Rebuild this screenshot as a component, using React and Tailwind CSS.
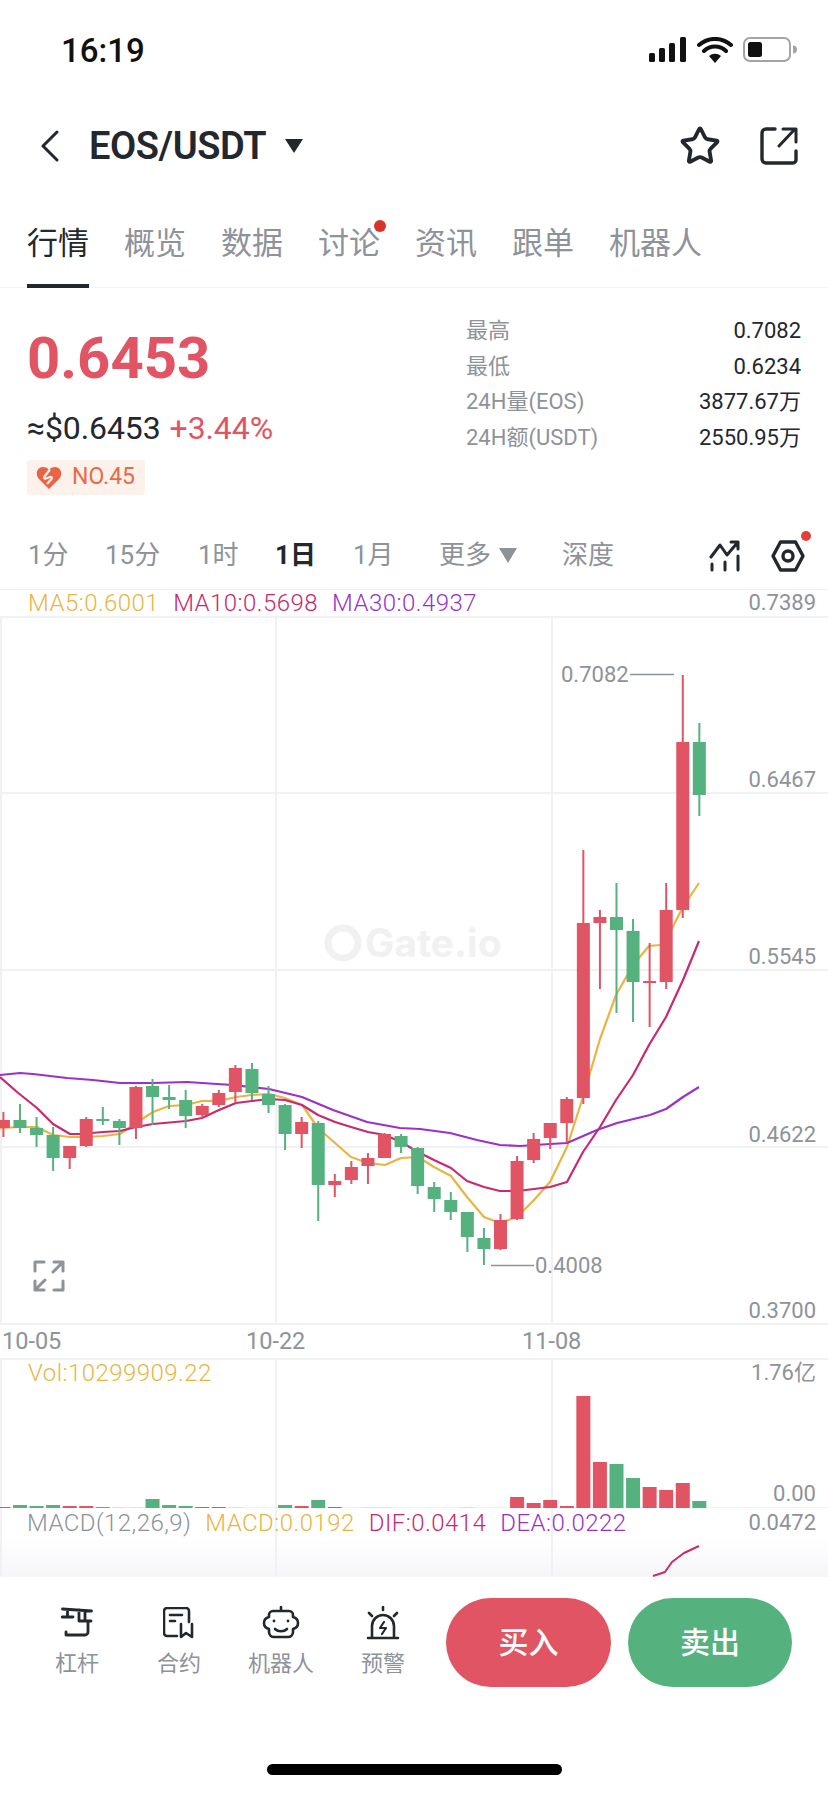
import React from "react";
import { Star } from "lucide-react";

const RED = "#e15464";
const GREEN = "#55b27f";
const ORANGE = "#e8b545";
const PINK = "#c8296f";
const PURPLE = "#9a32c8";

// i: index on the time axis; [color, wickTop, wickBottom, bodyTop, bodyBottom] in page pixels
const candles = [
  ["r", 1112, 1137, 1120, 1128],
  ["g", 1104, 1133, 1120, 1128],
  ["g", 1117, 1147, 1128, 1135],
  ["g", 1127, 1171, 1135, 1158],
  ["r", 1146, 1169, 1146, 1158],
  ["r", 1117, 1147, 1119, 1146],
  ["g", 1107, 1125, 1119, 1120, 1],
  ["g", 1119, 1145, 1121, 1128],
  ["r", 1086, 1139, 1087, 1128],
  ["g", 1079, 1125, 1086, 1097],
  ["g", 1085, 1109, 1097, 1099, 1],
  ["g", 1090, 1128, 1100, 1116],
  ["r", 1104, 1118, 1106, 1115],
  ["r", 1090, 1107, 1093, 1105],
  ["r", 1065, 1103, 1068, 1092],
  ["g", 1063, 1100, 1069, 1093],
  ["g", 1086, 1113, 1094, 1105],
  ["g", 1104, 1150, 1105, 1134],
  ["r", 1117, 1148, 1122, 1134],
  ["g", 1121, 1221, 1123, 1185],
  ["r", 1174, 1197, 1181, 1185],
  ["r", 1161, 1184, 1167, 1180],
  ["r", 1153, 1184, 1158, 1166],
  ["r", 1133, 1158, 1134, 1158],
  ["g", 1134, 1153, 1136, 1147],
  ["g", 1147, 1194, 1148, 1186],
  ["g", 1182, 1212, 1187, 1199],
  ["g", 1192, 1220, 1200, 1212],
  ["g", 1212, 1252, 1212, 1237],
  ["g", 1228, 1265, 1238, 1249],
  ["r", 1214, 1250, 1220, 1249],
  ["r", 1156, 1220, 1161, 1219],
  ["r", 1133, 1163, 1139, 1160],
  ["r", 1123, 1149, 1123, 1138],
  ["r", 1097, 1142, 1099, 1123],
  ["r", 850, 1104, 923, 1098],
  ["r", 910, 989, 917, 923],
  ["g", 883, 1013, 917, 930],
  ["g", 919, 1022, 931, 982],
  ["r", 943, 1027, 981, 982, 1],
  ["r", 883, 989, 910, 982],
  ["r", 675, 918, 742, 910],
  ["g", 723, 816, 742, 795],
];

const cx = (i) => 3.4 + i * 16.57;

const ma30 =
  "0,1075 20,1073 33,1074 67,1078 93,1080 120,1083 153,1083 187,1082 217,1084 233,1085 269,1089 302,1097 333,1110 367,1122 400,1128 420,1129 450,1133 477,1140 500,1145 520,1146 550,1144 567,1143 597,1130 617,1123 650,1115 666,1109 683,1097 699,1087";
const ma10 =
  "0,1077 17,1092 37,1108 53,1124 70,1134 80,1134 103,1132 120,1131 136,1127 153,1124 186,1121 202,1118 219,1110 236,1103 252,1101 269,1099 285,1100 302,1105 318,1115 335,1122 351,1127 368,1132 385,1135 401,1142 418,1152 434,1160 451,1168 467,1181 484,1187 500,1191 517,1191 534,1189 550,1187 567,1182 583,1152 600,1127 616,1100 633,1075 649,1045 666,1017 683,980 699,941";
const ma5 =
  "0,1128 20,1127 37,1127 53,1135 70,1137 87,1137 103,1136 120,1134 136,1123 153,1112 169,1106 186,1105 202,1101 219,1101 236,1097 252,1095 269,1094 285,1098 302,1105 318,1128 335,1143 351,1157 368,1163 385,1165 401,1158 418,1157 434,1167 451,1176 467,1197 484,1217 500,1223 517,1217 534,1200 550,1182 567,1147 583,1097 600,1039 616,995 633,965 649,946 660,945 666,940 683,907 699,883";

const volBars = [
  [0, 1507, "r"], [1, 1505, "g"], [2, 1506, "g"], [3, 1505, "g"], [4, 1506, "r"], [5, 1506, "r"], [6, 1507, "g"],
  [7, 1507, "n"], [8, 1507, "n"], [9, 1499, "g"], [10, 1505, "g"], [11, 1506, "g"], [12, 1507, "r"], [13, 1507, "r"],
  [14, 1507, "n"], [17, 1505, "g"], [18, 1506, "r"], [19, 1500, "g"], [20, 1507, "r"], [22, 1507, "n"], [23, 1507, "n"],
  [28, 1507, "n"], [31, 1497, "r"], [32, 1503, "r"], [33, 1500, "r"], [34, 1506, "r"], [35, 1396, "r"], [36, 1462, "r"],
  [37, 1464, "g"], [38, 1478, "g"], [39, 1487, "r"], [40, 1490, "r"], [41, 1483, "r"], [42, 1501, "g"],
];

const barFill = { r: RED, g: GREEN, n: "#dfe1e4" };

const tabs = ["行情", "概览", "数据", "讨论", "资讯", "跟单", "机器人"];
const periods = [
  ["1分", "w-[77px]"],
  ["15分", "w-[93px]"],
  ["1时", "w-[77px]"],
  ["1日", "w-[78px]"],
  ["1月", "w-[86px]"],
];
const stats = [
  ["最高", "0.7082"],
  ["最低", "0.6234"],
  ["24H量(EOS)", "3877.67万"],
  ["24H额(USDT)", "2550.95万"],
];

const StatusIcons = () => (
  <svg width="148" height="26" viewBox="0 0 148 26">
    <rect x="0" y="16" width="6" height="9" rx="1.5" fill="#111" />
    <rect x="10" y="11" width="6" height="14" rx="1.5" fill="#111" />
    <rect x="20" y="6" width="6" height="19" rx="1.5" fill="#111" />
    <rect x="31" y="0" width="6" height="25" rx="1.5" fill="#111" />
    <path d="M50 8a24 24 0 0 1 32 0M55 14a16 16 0 0 1 22 0" fill="none" stroke="#111" strokeWidth="4" strokeLinecap="round" />
    <path d="M60 19a9 9 0 0 1 12 0l-6 7z" fill="#111" />
    <rect x="95" y="1" width="46" height="23" rx="6" fill="none" stroke="#a4a4a4" strokeWidth="2" />
    <rect x="99" y="5" width="14" height="15" rx="2.5" fill="#111" />
    <path d="M144 8.5a4 4 0 0 1 0 8z" fill="#a4a4a4" />
  </svg>
);

const ShareIcon = () => (
  <svg width="38" height="38" viewBox="0 0 38 38" fill="none" stroke="#23272e" strokeWidth="3.4" strokeLinecap="round" strokeLinejoin="round">
    <path d="M15 2H6a4 4 0 0 0-4 4v26a4 4 0 0 0 4 4h27a3 3 0 0 0 3-3V24" />
    <path d="M19 19L35 2M23 2h13v13" strokeWidth="3" />
  </svg>
);

const LeverIcon = () => (
  <svg width="32" height="32" viewBox="0 0 32 32" fill="none" stroke="#23272e" strokeWidth="2.8" strokeLinecap="round" strokeLinejoin="round">
    <path d="M1.500 2l29 2M1 10h11M6.500 3v7M18 14h12M24 4v10M18 3v11M27 14v11a3 3 0 0 1-3 3H5M5 25v3" />
  </svg>
);

const ContractIcon = () => (
  <svg width="32" height="32" viewBox="0 0 32 32" fill="none" stroke="#23272e" strokeWidth="2.6" strokeLinecap="round" strokeLinejoin="round">
    <path d="M26 15V4a3 3 0 0 0-3-3H4a3 3 0 0 0-3 3v22a3 3 0 0 0 3 3h10" />
    <path d="M7 8h12M7 14h5M18 17v13l5-4 6 4V17" />
  </svg>
);

const RobotIcon = () => (
  <svg width="38" height="34" viewBox="0 0 38 34" fill="none" stroke="#23272e" strokeWidth="2.6" strokeLinecap="round" strokeLinejoin="round">
    <path d="M19 1v4M11 5h16a4 4 0 0 1 4 4v2c4 1 5 4 5 6s-1 5-5 6v3a5 5 0 0 1-5 5H12a5 5 0 0 1-5-5v-3c-4-1-5-4-5-6s1-5 5-6V9a4 4 0 0 1 4-4z" />
    <path d="M13 23c3 3 9 3 12 0" />
    <circle cx="12" cy="15" r="1.4" fill="#23272e" stroke="none" />
    <circle cx="26" cy="15" r="1.4" fill="#23272e" stroke="none" />
  </svg>
);

const AlarmIcon = () => (
  <svg width="34" height="34" viewBox="0 0 34 34" fill="none" stroke="#23272e" strokeWidth="2.6" strokeLinecap="round" strokeLinejoin="round">
    <path d="M2 32h30M6 32V20a11 11 0 0 1 22 0v12M17 1v3M3 7l3 3M31 7l-3 3" />
    <path d="M18 16l-4 6h6l-4 6" strokeWidth="2.2" />
  </svg>
);

const tools = [
  ["杠杆", LeverIcon],
  ["合约", ContractIcon],
  ["机器人", RobotIcon],
  ["预警", AlarmIcon],
];

const MainChart = () => (
  <svg className="absolute left-0 top-0" width="828" height="769" viewBox="0 589 828 769">
    {/* grid */}
    <g stroke="#f0f1f5" strokeWidth="2">
      <path d="M0 589H828M0 617H828M0 793H828M0 970H828M0 1147H828M0 1324H828" fill="none" />
      <path d="M1 617V1324M276 617V1324M552 617V1324" fill="none" />
    </g>
    {/* watermark */}
    <circle cx="343" cy="943" r="15" fill="none" stroke="#f1f1f1" strokeWidth="7" />
    <text x="365" y="957" fontSize="39" fontWeight="700" fill="#f1f1f1" fontFamily="Inter, sans-serif">Gate.io</text>
    {/* moving averages */}
    <g fill="none" strokeWidth="2.2" strokeLinejoin="round">
      <polyline points={ma5} stroke={ORANGE} />
      <polyline points={ma10} stroke={PINK} />
      <polyline points={ma30} stroke={PURPLE} />
    </g>
    {/* candles */}
    {candles.map(([c, wt, wb, bt, bb, doji], i) => {
      const color = c === "r" ? RED : GREEN;
      return (
        <g key={i} fill={color}>
          <rect x={cx(i) - 1} y={wt} width="2" height={wb - wt} />
          <rect x={cx(i) - 6.5} y={bt} width="13" height={bb - bt + (doji ? 1 : 0)} />
        </g>
      );
    })}
    {/* high / low markers */}
    <path d="M630 674.5H674M491 1265.5H534" stroke="#8e9299" strokeWidth="1.5" fill="none" />
    <g fill="#8e9299" fontSize="22" fontFamily="Roboto, sans-serif">
      <text x="561" y="682">0.7082</text>
      <text x="535" y="1273">0.4008</text>
      <text x="816" y="787" textAnchor="end">0.6467</text>
      <text x="816" y="964" textAnchor="end">0.5545</text>
      <text x="816" y="1142" textAnchor="end">0.4622</text>
      <text x="816" y="1318" textAnchor="end">0.3700</text>
      <text x="2" y="1349" fontSize="23.5">10-05</text>
      <text x="246" y="1349" fontSize="23.5">10-22</text>
      <text x="522" y="1349" fontSize="23.5">11-08</text>
    </g>
  </svg>
);

const VolumeChart = () => (
  <svg className="absolute left-0 top-0" width="828" height="150" viewBox="0 1358 828 150">
    <path d="M0 1359H828M0 1508H828" stroke="#f0f1f5" strokeWidth="2" fill="none" />
    <path d="M1 1358V1508M276 1358V1508M552 1358V1508" stroke="#f0f1f5" strokeWidth="2" fill="none" />
    {volBars.map(([i, top, c]) => (
      <rect key={i} x={cx(i) - 7} y={top} width="14" height={1508 - top} fill={barFill[c]} />
    ))}
  </svg>
);

const MacdChart = () => (
  <svg className="absolute left-0 top-0" width="828" height="69" viewBox="0 1508 828 69">
    <path d="M1 1508V1577M276 1508V1577M552 1508V1577" stroke="#f0f1f5" strokeWidth="2" fill="none" />
    <polyline points="653,1576 665,1572 672,1562 684,1553 699,1546" fill="none" stroke={PINK} strokeWidth="2" strokeLinejoin="round" />
  </svg>
);

const App = () => {
  return (
    <div className="w-[828px] h-[1793px] bg-white flex flex-col overflow-hidden font-['Roboto','Noto_Sans_CJK_SC',sans-serif]">
      {/* status bar */}
      <div className="h-[100px] shrink-0 flex items-center justify-between pl-[61px] pr-[31px]">
        <span className="pt-[2px] text-[33px] font-medium text-[#111]">16:19</span>
        <StatusIcons />
      </div>

      {/* header */}
      <div className="h-[90px] shrink-0 flex items-center pl-[40px] pr-[30px] pt-[2px]">
        <svg width="20" height="32" viewBox="0 0 20 32" fill="none" stroke="#23272e" strokeWidth="3" strokeLinecap="round" strokeLinejoin="round">
          <path d="M17 2L3 16l14 14" />
        </svg>
        <span className="ml-[29px] text-[38px] font-semibold text-[#23272e] tracking-[-0.4px]">EOS/USDT</span>
        <svg className="ml-[19px]" width="18" height="14" viewBox="0 0 18 14">
          <path d="M0 0h18L9 14z" fill="#23272e" />
        </svg>
        <div className="ml-auto flex items-center gap-[39px]">
          <Star size={42} strokeWidth={2.2} color="#23272e" />
          <ShareIcon />
        </div>
      </div>

      {/* tabs */}
      <div className="h-[98px] shrink-0 flex items-start gap-[35px] px-[27px] pt-[35px] border-b border-[#f3f4f6]">
        {tabs.map((t, i) => (
          <div key={t} className={`relative h-[63px] text-[31px] leading-[38px] ${i === 0 ? "text-[#23272e] border-b-[4px] border-[#23272e]" : "text-[#8e9299]"}`}>
            {t}
            {i === 3 && <span className="absolute -right-[6px] -top-[5px] w-[12px] h-[12px] rounded-full bg-[#d9342b]" />}
          </div>
        ))}
      </div>

      {/* price summary */}
      <div className="h-[232px] shrink-0 flex justify-between pl-[27px] pr-[27px]">
        <div className="flex flex-col items-start">
          <div className="mt-[35px] h-[70px] flex items-center text-[58px] font-bold leading-none text-[#e15464]">0.6453</div>
          <div className="mt-[15px] h-[40px] flex items-center gap-[9px] text-[32px] tracking-[-0.1px]">
            <span className="text-[#23272e]">≈$0.6453</span>
            <span className="text-[#e15464]">+3.44%</span>
          </div>
          <div className="mt-[12px] h-[35px] flex items-center gap-[10px] pl-[9px] pr-[10px] rounded-[4px] bg-[#fdf1ec] text-[23px] text-[#ea6a45]">
            <svg width="26" height="24" viewBox="0 0 26 24">
              <path d="M13 23L2.5 12.5C-1 8 1 1 7 1c2.5 0 5 1 6 3 1-2 3.5-3 6-3 6 0 8 7 4.5 11.5z" fill="#ea6345" />
              <path d="M14 3.5L8.5 10.5c-1 1.5 0 2.5 1.5 2l4-1.5c1.5-.5 2.5 1 1.500 2L11 18" fill="none" stroke="#fdf1ec" strokeWidth="2.2" />
            </svg>
            NO.45
          </div>
        </div>
        <div className="w-[335px] pt-[25px] flex flex-col">
          {stats.map(([k, v]) => (
            <div key={k} className="h-[35.5px] flex items-center justify-between text-[22px]">
              <span className="text-[#8e9299]">{k}</span>
              <span className="text-[#23272e]">{v}</span>
            </div>
          ))}
        </div>
      </div>

      {/* period selector */}
      <div className="h-[69px] shrink-0 flex items-center pl-[28px] pr-[23px] pt-[2px] text-[26px] text-[#8e9299]">
        {periods.map(([p, w]) => (
          <span key={p} className={`${w} ${p === "1日" ? "font-bold text-[#23272e]" : ""}`}>{p}</span>
        ))}
        <span>更多</span>
        <svg className="ml-[8px]" width="18" height="15" viewBox="0 0 18 15">
          <path d="M0 0h18L9 15z" fill="#8e9299" />
        </svg>
        <span className="ml-[45px]">深度</span>
        <div className="relative ml-auto flex items-center gap-[30px]">
          <svg width="32" height="32" viewBox="0 0 32 32" fill="none" stroke="#23272e" strokeWidth="3" strokeLinecap="round" strokeLinejoin="round">
            <path d="M2 17L11 5l7 10L29 2M22 2h7v7M3 24v6M16 22v8M29 16v14" />
          </svg>
          <svg width="34" height="32" viewBox="0 0 34 32" fill="none" stroke="#23272e" strokeWidth="3.4" strokeLinejoin="round">
            <path d="M9.5 2h15L32 16l-7.5 14h-15L2 16z" />
            <circle cx="17" cy="16" r="5" />
          </svg>
          <span className="absolute -right-[6px] -top-[9px] w-[10px] h-[10px] rounded-full bg-[#e0413a]" />
        </div>
      </div>

      {/* main chart */}
      <div className="relative h-[769px] shrink-0">
        <MainChart />
        <div className="relative h-[28px] flex items-center pl-[28px] pr-[12px] gap-[14px] text-[24px] font-light leading-none tracking-[0.45px]">
          <span className="text-[#e8b545]">MA5:0.6001</span>
          <span className="text-[#c8296f]">MA10:0.5698</span>
          <span className="text-[#9a32c8]">MA30:0.4937</span>
          <span className="ml-auto text-[22px] font-normal tracking-normal text-[#8e9299]">0.7389</span>
        </div>
        {/* fullscreen button */}
        <svg className="absolute left-[33px] top-[671px]" width="32" height="32" viewBox="0 0 32 32" fill="none" stroke="#8e9299" strokeWidth="3" strokeLinecap="round" strokeLinejoin="round">
          <path d="M11 2H2v9M21 30h9v-9M20 12L30 2M21 2h9v9M12 20L2 30M2 21v9h9" />
        </svg>
      </div>

      {/* volume */}
      <div className="relative h-[150px] shrink-0">
        <VolumeChart />
        <div className="relative h-[28px] mt-[1px] flex items-center pl-[28px] pr-[12px] text-[24px] font-light leading-none tracking-[0.45px]">
          <span className="text-[#e8b545]">Vol:10299909.22</span>
          <span className="ml-auto text-[22px] font-normal tracking-normal text-[#8e9299]">1.76亿</span>
        </div>
        <span className="absolute right-[12px] top-[125px] text-[22px] leading-none text-[#8e9299]">0.00</span>
      </div>

      {/* macd */}
      <div className="relative h-[69px] shrink-0 bg-gradient-to-b from-white from-40% to-[#f6f6f9]">
        <MacdChart />
        <div className="relative h-[30px] flex items-center pl-[27px] pr-[12px] gap-[14px] text-[24px] font-light leading-none tracking-[0.45px]">
          <span className="text-[#8e9299]">MACD(12,26,9)</span>
          <span className="text-[#e8b545]">MACD:0.0192</span>
          <span className="text-[#c8296f]">DIF:0.0414</span>
          <span className="text-[#9a32c8]">DEA:0.0222</span>
          <span className="ml-auto text-[22px] font-normal tracking-normal text-[#8e9299]">0.0472</span>
        </div>
      </div>

      {/* bottom actions */}
      <div className="flex-1 flex flex-col items-stretch">
        <div className="mt-[21px] flex items-center pl-[26px] pr-[36px]">
          <div className="flex">
            {tools.map(([label, Icon]) => (
              <div key={label} className="w-[102px] flex flex-col items-center">
                <div className="h-[34px] flex items-center">
                  <Icon />
                </div>
                <span className="mt-[9px] text-[22px] leading-[30px] text-[#8e9299]">{label}</span>
              </div>
            ))}
          </div>
          <button className="ml-auto w-[165px] h-[89px] rounded-full bg-[#e15464] text-[30px] font-medium text-white">买入</button>
          <button className="ml-[17px] w-[164px] h-[89px] rounded-full bg-[#55b27f] text-[30px] font-medium text-white">卖出</button>
        </div>
        <div className="mt-auto mb-[18px] mx-auto w-[295px] h-[11px] rounded-full bg-black" />
      </div>
    </div>
  );
};

export default App;
